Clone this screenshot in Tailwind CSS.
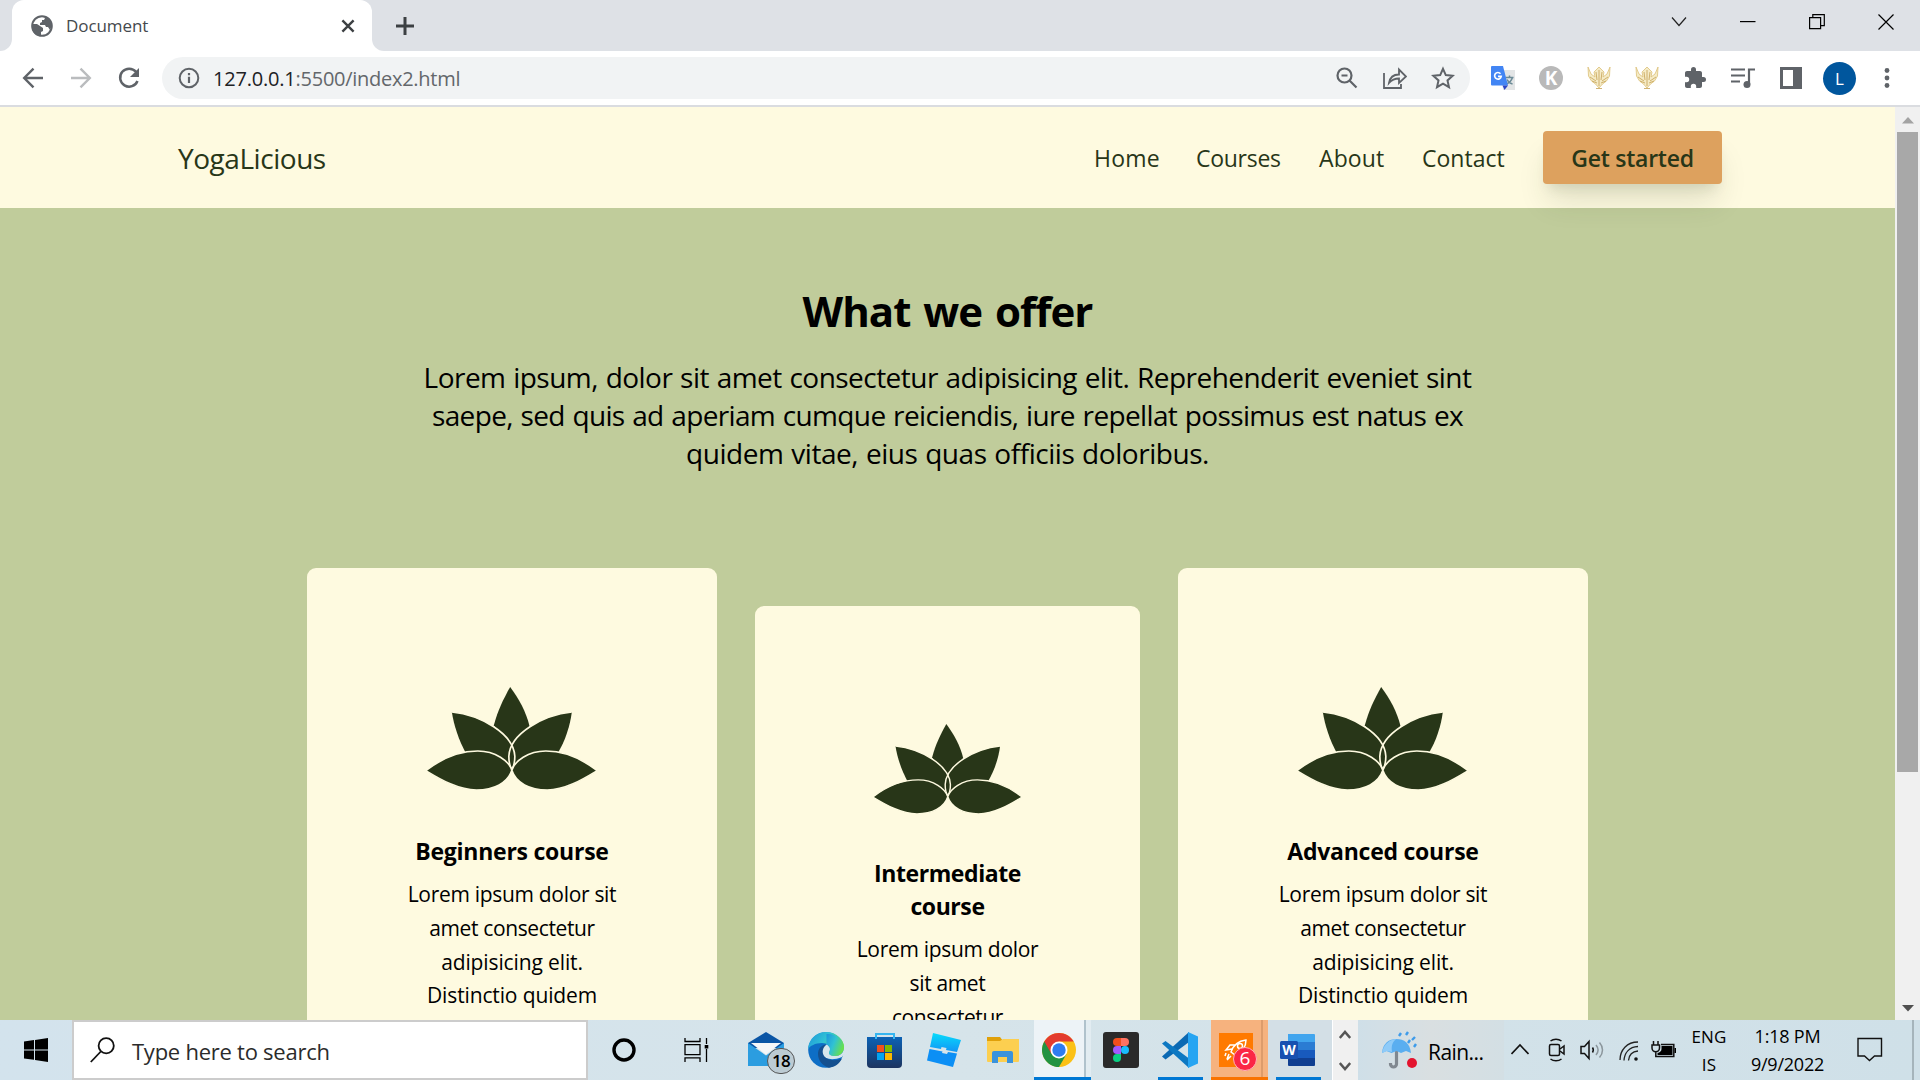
<!DOCTYPE html>
<html lang="en">
<head>
<meta charset="utf-8">
<title>Document</title>
<script src="https://cdn.jsdelivr.net/npm/@tailwindcss/browser@4"></script>
</head>
<body class="w-[1920px] h-[1080px] overflow-hidden flex flex-col bg-white font-['Open_Sans','Noto_Sans',sans-serif]">

<!-- Tab strip -->
<header class="h-[51px] shrink-0 bg-[#dee1e6] flex justify-between">
  <div class="flex">
    <div class="flex items-end">
      <div class="w-3 h-3 bg-white"><div class="w-3 h-3 bg-[#dee1e6] rounded-br-[12px]"></div></div>
      <div class="w-[360px] h-[51px] bg-white rounded-t-[12px] flex items-center pl-[19px] pr-[17px]">
        <svg class="w-[22px] h-[22px]" viewBox="0 0 22 22"><circle cx="11" cy="11" r="9.8" fill="#fff" stroke="#5f6368" stroke-width="2"/><path fill="#5f6368" d="M1 9h5l6 4v3l-2 1v4C4 21 0 16 1 9zM13 1l1 2-1 2h-2v2l-2 1v2h5l1 2h2l2 3c3-5 1-12-6-14z"/></svg>
        <span class="ml-[13px] text-[17px] leading-6 tracking-[-0.08px] text-[#45494d]">Document</span>
        <svg class="ml-auto w-[14px] h-[14px]" viewBox="0 0 14 14" stroke="#3c4043" stroke-width="2.4"><path d="M1.4 1.4l11.2 11.2M12.6 1.4L1.4 12.6"/></svg>
      </div>
      <div class="w-3 h-3 bg-white"><div class="w-3 h-3 bg-[#dee1e6] rounded-bl-[12px]"></div></div>
    </div>
    <svg class="ml-3 mt-[17px] w-[18px] h-[18px]" viewBox="0 0 18 18" stroke="#3c4043" stroke-width="3"><path d="M9 0v18M0 9h18"/></svg>
  </div>
  <div class="flex gap-[53px] pr-[26px] pt-[14px]">
    <svg class="w-4 h-4" viewBox="0 0 16 16" fill="none" stroke="#222" stroke-width="1.2"><path d="M1 3.5l7 8 7-8"/></svg>
    <svg class="w-4 h-4" viewBox="0 0 16 16" fill="none" stroke="#000" stroke-width="1.2"><path d="M0 7.6h15.5"/></svg>
    <svg class="w-4 h-4" viewBox="0 0 16 16" fill="none" stroke="#000" stroke-width="1.2"><path d="M.6 3.6h11v11H.6zM3.8 3.6V.7h11.5v11h-3.6"/></svg>
    <svg class="w-4 h-4" viewBox="0 0 16 16" fill="none" stroke="#000" stroke-width="1.2"><path d="M.5.5l15 15M15.500.5l-15 15"/></svg>
  </div>
</header>

<!-- Toolbar -->
<div class="h-[56px] shrink-0 bg-white border-b-2 border-[#dadce0] flex items-center pl-[22px]">
  <svg class="w-[22px] h-[22px]" viewBox="0 0 22 22" fill="none" stroke="#5f6368" stroke-width="2.4"><path d="M21 11H2.500M11.500 1.700L2.200 11l9.300 9.300"/></svg>
  <svg class="ml-[26px] w-[22px] h-[22px]" viewBox="0 0 22 22" fill="none" stroke="#babcbe" stroke-width="2.400"><path d="M1 11h18.500M10.500 1.700l9.300 9.300-9.300 9.300"/></svg>
  <svg class="ml-[25px] w-[24px] h-[24px]" viewBox="0 0 24 24"><path fill="none" stroke="#5f6368" stroke-width="2.500" d="M19 5.800A9 9 0 1 0 20.500 15"/><path fill="#5f6368" d="M22 2v9h-9z"/></svg>
  <div class="ml-[21px] w-[1308px] h-[42px] rounded-full bg-[#f1f3f4] flex items-center pl-4 pr-[15px]">
    <svg class="w-[22px] h-[22px]" viewBox="0 0 22 22"><circle cx="11" cy="11" r="9.300" fill="none" stroke="#5f6368" stroke-width="2"/><path stroke="#5f6368" stroke-width="2.200" d="M11 9.800v6.200M11 6v2.200"/></svg>
    <p class="ml-[13px] pt-[2px] text-[20px] leading-7 tracking-[-0.27px] text-[#63676b]"><span class="text-[#202124] tracking-[-0.2px]">127.0.0.1</span>:5500/index2.html</p>
    <div class="ml-auto flex items-center gap-6">
      <svg class="w-6 h-6" viewBox="0 0 24 24" fill="none" stroke="#5f6368" stroke-width="2.200"><circle cx="9.500" cy="9.500" r="7"/><path d="M6.500 9.500h6M14.500 14.500l7 7"/></svg>
      <svg class="w-6 h-6" viewBox="0 0 24 24" fill="none" stroke="#5f6368" stroke-width="1.800"><path d="M1 7v15h17v-4M6 17c1-6 5-8.500 10-8.500V3.500l7 7-7 6.500v-4.500c-4 0-7 1-10 4.500z"/></svg>
      <svg class="w-6 h-6" viewBox="0 0 24 24" fill="none" stroke="#5f6368" stroke-width="2"><path d="M12 2.800l2.800 6.300 6.900.7-5.200 4.600 1.500 6.800-6-3.500-6 3.500 1.500-6.800L2.300 9.800l6.900-.7z"/></svg>
    </div>
  </div>
  <div class="ml-[21px] flex items-center gap-6">
    <svg class="w-6 h-6" viewBox="0 0 24 24"><path fill="#e3e5e6" d="M10 4h14v20H12z"/><path d="M14.500 11.500h8M18.500 9.500v2M21.500 11.500c-1 3-3.500 5.500-6 6.500M16 13.500c1 2 3.500 4 5.500 4.500" fill="none" stroke="#6b8a96" stroke-width="1.500"/><path fill="#4285f4" d="M1 0h11l5 19.500H1a1 1 0 0 1-1-1V1a1 1 0 0 1 1-1z"/><path fill="#2b45c4" d="M11.500 19.500H17L13.500 24z"/><path fill="none" stroke="#fff" stroke-width="1.700" d="M9.500 7.700A3.300 3.300 0 1 0 10.200 10.300H7"/></svg>
    <div class="w-6 h-6 rounded-full bg-[#b9b9b9] text-white font-bold text-[19px] leading-6 text-center">K</div>
    <svg class="w-6 h-6" viewBox="0 0 24 24"><path fill="#f5ebc6" stroke="#dcc078" stroke-width=".8" d="M1 1l3 7 4 3-1-5 3-3 2-2 2 2 3 3-1 5 4-3 3-7-.5 9-3 5-4 3-3.500 4-3.500-4-4-3-3-5z"/><path fill="none" stroke="#c4a053" stroke-width=".8" d="M3 11l6 4M5 15l5 2M21 11l-6 4M19 15l-5 2M12 4v16M9 6l1 8M15 6l-1 8M9 22.500h6"/></svg>
    <svg class="w-6 h-6" viewBox="0 0 24 24"><path fill="#f5ebc6" stroke="#dcc078" stroke-width=".8" d="M1 1l3 7 4 3-1-5 3-3 2-2 2 2 3 3-1 5 4-3 3-7-.5 9-3 5-4 3-3.500 4-3.500-4-4-3-3-5z"/><path fill="none" stroke="#c4a053" stroke-width=".8" d="M3 11l6 4M5 15l5 2M21 11l-6 4M19 15l-5 2M12 4v16M9 6l1 8M15 6l-1 8M9 22.500h6"/></svg>
    <svg class="w-6 h-6" viewBox="0 0 24 24" fill="#5f6368"><path d="M20.500 11H19V7c0-1.100-.9-2-2-2h-4V3.500a2.500 2.500 0 0 0-5 0V5H4c-1.100 0-2 .9-2 2v3.800h1.500a2.700 2.700 0 0 1 0 5.400H2V20c0 1.100.9 2 2 2h3.800v-1.500a2.700 2.700 0 0 1 5.400 0V22H17c1.100 0 2-.9 2-2v-4h1.500a2.500 2.500 0 0 0 0-5z"/></svg>
    <svg class="w-6 h-6" viewBox="0 0 24 24"><path fill="none" stroke="#5f6368" stroke-width="2.200" d="M0 3.500h14M0 9.500h14M0 15.500h9M18 18V3.500h6"/><circle cx="16" cy="18.500" r="3.500" fill="#5f6368"/></svg>
    <svg class="w-6 h-6" viewBox="0 0 24 24" fill="#5f6368"><path fill-rule="evenodd" d="M1 1h22v22H1zM4 4v16h10V4z"/></svg>
    <div class="-ml-1 w-[33px] h-[33px] rounded-full bg-[#00569d] text-white text-[17px] leading-[33px] text-center">L</div>
    <svg class="w-[14px] h-6" viewBox="0 0 14 24" fill="#5f6368"><circle cx="7" cy="4.500" r="2.400"/><circle cx="7" cy="12" r="2.400"/><circle cx="7" cy="19.500" r="2.400"/></svg>
  </div>
</div>

<svg class="hidden">
  <symbol id="lotus" viewBox="0 0 506 309">
    <g fill="#283618">
      <path d="M249 0C275 35 297 75 307 117L254 200 200 115C212 70 228 38 249 0z"/>
      <path d="M74 75C160 84 260 140 263 208C263 222 259 240 254 247L117 200C95 160 80 115 74 75z"/>
      <path d="M434 75C348 84 248 140 245 208C245 222 249 240 254 247L391 200C415 160 429 115 434 75z"/>
      <g fill="none" stroke="#fefae0" stroke-width="5">
        <path d="M74 75C160 84 260 140 263 208C263 222 259 240 254 247"/>
        <path d="M434 75C348 84 248 140 245 208C245 222 249 240 254 247"/>
      </g>
      <path stroke="#fefae0" stroke-width="5" d="M-4 251C45 213 98 192 152 192C205 192 246 222 254 250C242 288 200 309 148 309C95 309 42 279-4 251z"/>
      <path stroke="#fefae0" stroke-width="5" d="M510 251C461 213 410 192 356 192C303 192 262 222 254 250C266 288 308 309 360 309C413 309 464 279 510 251z"/>
    </g>
  </symbol>
</svg>

<!-- Page viewport -->
<div class="h-[913px] shrink-0 flex overflow-hidden">
  <main class="w-[1895px] h-full overflow-hidden bg-[#c0cc9b] text-black">
    <nav class="h-[101px] bg-[#fefae0] flex items-center justify-between pl-[178px] pr-[173px] text-[#283618]">
      <span class="text-[28px] leading-9 tracking-[-0.46px]">YogaLicious</span>
      <div class="flex items-center text-[23px] leading-[30px]">
        <span class="w-[102px] pt-[1px] tracking-[0.2px]">Home</span>
        <span class="w-[123px] pt-[1px] tracking-[-0.28px]">Courses</span>
        <span class="w-[103px] pt-[1px] tracking-[0.1px]">About</span>
        <span class="w-[121px] pt-[1px]">Contact</span>
        <span class="w-[179px] h-[53px] pt-[1px] rounded-[4px] bg-[#dda15e] font-semibold tracking-[-0.25px] leading-[52px] text-center shadow-[0_22px_30px_-5px_rgba(40,54,24,0.13),0_9px_12px_-6px_rgba(40,54,24,0.13)]">Get started</span>
      </div>
    </nav>
    <section class="pt-[75px] flex flex-col items-center text-center">
      <h1 class="text-[42px] leading-[56px] font-bold tracking-[-1px] [word-spacing:3px]">What we offer</h1>
      <div class="mt-5 text-[28px] leading-[37.5px] [word-spacing:1px]">
        <p class="tracking-[-0.53px]">Lorem ipsum, dolor sit amet consectetur adipisicing elit. Reprehenderit eveniet sint</p>
        <p class="tracking-[-0.64px]">saepe, sed quis ad aperiam cumque reiciendis, iure repellat possimus est natus ex</p>
        <p class="tracking-[-0.46px] pt-[1px]">quidem vitae, eius quas officiis doloribus.</p>
      </div>
      <div class="mt-[95.5px] flex items-start gap-[38px]">
        <article class="w-[410px] h-[600px] pt-[119px] rounded-[9px] bg-[#fefae0] flex flex-col items-center">
          <svg class="-ml-[1px] w-[169px] h-[103px]"><use href="#lotus"/></svg>
          <h2 class="mt-[45px] text-[23px] leading-[33px] font-bold tracking-[-0.25px]">Beginners course</h2>
          <div class="mt-[10px] text-[21px] leading-[33.75px]">
            <p class="tracking-[-0.31px]">Lorem ipsum dolor sit</p>
            <p class="tracking-[-0.37px]">amet consectetur</p>
            <p class="tracking-[-0.12px]">adipisicing elit.</p>
            <p class="tracking-[-0.13px]">Distinctio quidem</p>
          </div>
        </article>
        <article class="mt-[38px] w-[385px] h-[600px] pt-[118px] rounded-[9px] bg-[#fefae0] flex flex-col items-center">
          <svg class="w-[147px] h-[90px]"><use href="#lotus"/></svg>
          <h2 class="mt-[43px] text-[23px] leading-[33px] font-bold tracking-[-0.42px]">Intermediate<br>course</h2>
          <div class="mt-[10px] text-[21px] leading-[33.75px]">
            <p class="tracking-[-0.3px]">Lorem ipsum dolor</p>
            <p class="tracking-[-0.33px]">sit amet</p>
            <p class="tracking-[-0.42px]">consectetur</p>
          </div>
        </article>
        <article class="w-[410px] h-[600px] pt-[119px] rounded-[9px] bg-[#fefae0] flex flex-col items-center">
          <svg class="-ml-[1px] w-[169px] h-[103px]"><use href="#lotus"/></svg>
          <h2 class="mt-[45px] text-[23px] leading-[33px] font-bold tracking-[-0.25px]">Advanced course</h2>
          <div class="mt-[10px] text-[21px] leading-[33.75px]">
            <p class="tracking-[-0.31px]">Lorem ipsum dolor sit</p>
            <p class="tracking-[-0.37px]">amet consectetur</p>
            <p class="tracking-[-0.12px]">adipisicing elit.</p>
            <p class="tracking-[-0.13px]">Distinctio quidem</p>
          </div>
        </article>
      </div>
    </section>
  </main>
  <!-- Scrollbar -->
  <div class="w-[25px] h-full bg-[#f0f0f0] flex flex-col items-center">
    <svg class="h-[25px] w-3 shrink-0" viewBox="0 0 12 25"><path fill="#a3a3a3" d="M0 16.500L6 10l6 6.500z"/></svg>
    <div class="w-[21px] h-[640px] bg-[#a8a8a8]"></div>
    <svg class="mt-auto h-[25px] w-3 shrink-0" viewBox="0 0 12 25"><path fill="#505050" d="M0 10l6 6.500 6-6.500z"/></svg>
  </div>
</div>

<!-- Taskbar -->
<footer class="h-[60px] shrink-0 flex bg-linear-to-r from-[#d3e3ed] via-[#d6e4ea] to-[#cfe0e8] text-black">
  <div class="w-[72px] flex items-center justify-center">
    <svg class="w-6 h-6 -mt-[1px]" viewBox="0 0 24 24"><path d="M0 3.500l10-1.400v9.300H0zM11 1.900L24 0v11.400H11zM0 12.500h10v9.300L0 20.400zM11 12.500h13V24l-13-1.900z"/></svg>
  </div>
  <div class="w-[516px] h-[60px] border-2 border-[#ccc] bg-white flex items-center pl-4">
    <svg class="w-[25px] h-[26px]" viewBox="0 0 25 26" fill="none" stroke="#111" stroke-width="1.800"><circle cx="16.200" cy="8.800" r="7.600"/><path d="M10.800 14.500L.8 25"/></svg>
    <span class="ml-[17px] pt-[1px] text-[22px] leading-7 tracking-[-0.25px] text-[#2b2b2b]">Type here to search</span>
  </div>
  <div class="w-[72px] flex items-center justify-center"><svg class="w-6 h-6" viewBox="0 0 24 24"><circle cx="12" cy="12" r="10" fill="none" stroke="#000" stroke-width="3.400"/></svg></div>
  <div class="w-[72px] flex items-center justify-center"><svg class="w-[25px] h-6" viewBox="0 0 25 24" fill="none" stroke="#000" stroke-width="1.300"><path d="M1 0v3.500h15V0M1 6.700h15v10H1zM1 24v-4.200h15V24M22.500 0v6M22.500 11v13"/><path fill="#000" stroke="none" d="M20.700 7h3.600v3.500h-3.600z"/></svg></div>

  <div class="w-[62px] pl-4 pt-3"><div class="relative w-9 h-9">
    <svg class="w-9 h-9" viewBox="0 0 36 36"><path fill="#0a55a5" d="M0 11L18 0l18 11v5H0z"/><path fill="#2b9de0" d="M0 11l18 12.500L36 11v23H0z"/><path fill="#f4f6f8" d="M3 11h30L18 22.500z"/></svg>
    <div class="absolute left-[19px] top-[16px] w-7 h-[26px] rounded-full border-[1.5px] border-[#555] bg-[#bccbd3] text-[17px] leading-[23px] text-center font-semibold tracking-[-0.8px]">18</div>
  </div></div>
  <div class="w-[59px] pl-[14px] pt-3"><svg class="w-9 h-9" viewBox="0 0 36 36"><defs><linearGradient id="edgeTop" x1="0" x2="1" y1="0" y2=".5"><stop offset="0" stop-color="#1c95dc"/><stop offset=".5" stop-color="#30c2d4"/><stop offset="1" stop-color="#67e04e"/></linearGradient></defs><circle cx="18" cy="18" r="17.800" fill="#0d6ec6"/><path fill="url(#edgeTop)" d="M0 17C1 6 9 0 18 0c11 0 18 8 18 15 0 5-4 9-9 9-3 0-6-1-6-3 0-1 1-1.500 1-4 0-3-3-6-8-6C7 11 2 14 0 17z"/><path fill="#d6e6ec" d="M36 15c0 6-4 9-9 9-3 0-6-1-6-3 0-1 1-1.500 1-4 0-2-1.500-3.500-3.500-4.500-4 2-6 6-4 10C17 27 24 29 34 25l2-3z"/><path fill="url(#edgeTop)" d="M18.500 2C28 1 36 8 36 15c0 5-4 9-9 9-3 0-6-1-6-3 0-1 1-1.500 1-4 0-2-1.500-3.500-3.500-4.500z"/><path fill="#14508f" d="M18.500 12.500C13 13 10 17 10 22c0 7 5 12 11 13.700 6-.7 10-3.700 13-9.200-2 1-10 3.500-16-.5-4-3-5-9 .5-13.500z"/></svg></div>
  <div class="w-[60px] pl-[14px] pt-3"><svg class="w-9 h-9" viewBox="0 0 36 36"><defs><linearGradient id="store" x2="0" y2="1"><stop stop-color="#0b62b5"/><stop offset="1" stop-color="#1d3460"/></linearGradient></defs><path fill="url(#store)" d="M0 5h35v27a4 4 0 0 1-4 4H4a4 4 0 0 1-4-4z"/><path fill="none" stroke="#35b5f0" stroke-width="2" d="M9 7V2h18v5"/><path fill="#f1511b" d="M10 13h7v7h-7z"/><path fill="#80b900" d="M18 13h7v7h-7z"/><path fill="#02a4ef" d="M10 21h7v7h-7z"/><path fill="#fbb800" d="M18 21h7v7h-7z"/></svg></div>
  <div class="w-[60px] pl-[14px] pt-3"><svg class="w-9 h-9" viewBox="0 0 36 36"><defs><linearGradient id="studio" x2="0" y2="1"><stop stop-color="#08dcfb"/><stop offset="1" stop-color="#1195f5"/></linearGradient></defs><path fill="url(#studio)" d="M6 1l28 7-4 12-11-2 .5-2-5-1-.5 2-11-2z"/><path fill="#0c8ff5" d="M2.500 17l13 2.500-.5 1.500 5 1 1-2 9 1.500-4 13.500L0 28.500z"/></svg></div>
  <div class="w-[61px] pl-[14px] pt-3"><svg class="w-9 h-9" viewBox="0 0 36 36"><path fill="#e0a009" d="M0 5h13l3 4v3H0z"/><path fill="#fccf50" d="M0 9h13l3-2h16v22a1 1 0 0 1-1 1H1a1 1 0 0 1-1-1z"/><path fill="#3a93dc" d="M5 31V21a2 2 0 0 1 2-2h17a2 2 0 0 1 2 2v10h-6v-6H11v6z"/></svg></div>
  <div class="w-[57px] flex border-b-[3px] border-[#0078d4]">
    <div class="w-[50px] bg-[#edf3f7] flex items-center justify-center"><svg class="w-[34px] h-[34px] mt-[3px]" viewBox="0 0 34 34"><circle cx="17" cy="17" r="17" fill="#fbc116"/><path fill="#229342" d="M2.300 8.500A17 17 0 0 0 17 34l7.400-12.700L17 17z"/><path fill="#e33b2e" d="M2.300 8.500a17 17 0 0 1 29.400 0H17L9.600 21.300z"/><circle cx="17" cy="17" r="8.500" fill="#fff"/><circle cx="17" cy="17" r="6.700" fill="#2f7cf0"/></svg></div>
    <div class="w-[2px] bg-[#b0c2cc]"></div><div class="w-[5px] bg-[#e2ecf1]"></div>
  </div>
  <div class="w-[59px] pl-3 pt-3"><svg class="w-9 h-9" viewBox="0 0 36 36"><rect width="36" height="36" rx="3" fill="#2a2a2a"/><path fill="#f24e1e" d="M14 6h4v8h-4a4 4 0 0 1 0-8z"/><path fill="#ff7262" d="M18 6h4a4 4 0 0 1 0 8h-4z"/><path fill="#a259ff" d="M14 14h4v8h-4a4 4 0 0 1 0-8z"/><circle cx="22" cy="18" r="4" fill="#1abcfe"/><path fill="#0acf83" d="M14 22h4v4a4 4 0 1 1-4-4z"/></svg></div>
  <div class="w-[61px] px-2"><div class="h-[60px] border-b-[3px] border-[#0078d4] pl-1 pt-3"><svg class="w-9 h-9" viewBox="0 0 36 36"><path fill="#0b69b3" d="M0 24.500L27 0v10L3.500 27.500z"/><path fill="#0d78c2" d="M0 11.500L3.500 9 27 26.500V36z"/><path fill="#27a5f2" d="M26 0l10 4.500v27L26 36z"/></svg></div></div>
  <div class="w-[57px] flex bg-[#f6b27e] border-b-[3px] border-[#f97300]">
    <div class="w-[50px] pl-2 pt-[13px]"><div class="relative w-[34px] h-[34px] bg-[#ff7a00]">
      <svg class="w-[34px] h-[34px]" viewBox="0 0 34 34" fill="none" stroke="#fff" stroke-width="1.500"><path d="M12 19c2-6 7-11 15-12 0 7-4 12-11 15zM13 16l-6 1 4-5 5 0M18 22l-1 4M10 21l-2 5M12 23l-4 4M7 20l-1 3"/><circle cx="21" cy="13" r="2.500"/></svg>
      <div class="absolute left-[14px] top-[14px] w-[24px] h-[24px] rounded-full border-[1.500px] border-[#ffb3b8] bg-[#fb2645] text-white text-[19px] leading-[21px] text-center">6</div>
    </div></div>
    <div class="w-[2px] bg-[#dd9c6b]"></div>
  </div>
  <div class="w-[64px] pl-2 bg-[#d3dfe6]"><div class="w-[45px] h-[60px] border-b-[3px] border-[#0078d4] pl-1 pt-[13px]"><svg class="w-9 h-9" viewBox="0 0 36 36"><path fill="#41a5ee" d="M8 1h26a1 1 0 0 1 1 1v7H8z"/><path fill="#2b7cd3" d="M8 9h27v8H8z"/><path fill="#185abd" d="M8 17h27v8H8z"/><path fill="#103f91" d="M8 25h27v7a1 1 0 0 1-1 1H9a1 1 0 0 1-1-1z"/><rect y="8" width="18" height="18" rx="1.500" fill="#1850b0"/><text x="9" y="22" text-anchor="middle" font-size="14" font-weight="700" fill="#fff">W</text></svg></div></div>
  <div class="w-[26px] bg-[#f0f0f0] border-l border-white flex flex-col items-center justify-between pt-[9px] pb-2">
    <svg class="-ml-[1px] w-3 h-[11px]" viewBox="0 0 12 11" fill="none" stroke="#555" stroke-width="2.500"><path d="M.8 9L6 3l5.200 6"/></svg>
    <svg class="-ml-[1px] w-3 h-[11px]" viewBox="0 0 12 11" fill="none" stroke="#555" stroke-width="2.500"><path d="M.8 2L6 8l5.200-6"/></svg>
  </div>
  <div class="w-[146px] pl-6 flex items-center bg-linear-to-r from-[#cfdfe8] via-[#d9dfe1] to-[#d3dfe4]">
    <svg class="w-[36px] h-[38px]" viewBox="0 0 36 38"><path fill="none" stroke="#808890" stroke-width="3.200" d="M14.500 20v13a3 3 0 0 1-6 0v-1"/><path fill="#5aaef0" d="M0 22C1 12 7 8 14.500 8S28 12 29 22l-5-2-5 2-4.500-2-5 2-5-2z"/><path fill="#8fcbf8" d="M10 21C9 14 11 10 14.500 8c-6 0-13 5-14.500 14l5-2z"/><path stroke="#3d9bea" stroke-width="2.400" d="M17 5l2-3M24 4l2-3M30 9l3-3M26 12l2-3M32 16l2-3"/><circle cx="30" cy="32" r="5" fill="#e3142f"/></svg>
    <span class="ml-[10px] pt-[3px] text-[21px] leading-7 tracking-[-0.55px]">Rain...</span>
  </div>
  <div class="w-[182px] flex items-center pl-[7px]">
    <svg class="w-[18px] h-6" viewBox="0 0 18 24" fill="none" stroke="#111" stroke-width="1.600"><path d="M.5 16L9 7l8.500 9"/></svg>
    <svg class="ml-[19px] w-[19px] h-6" viewBox="0 0 19 24" fill="none" stroke="#111" stroke-width="1.500"><rect x="1.500" y="6.500" width="10" height="11" rx="1.500"/><path d="M12 11l4-3v8l-4-3M2.500 3c3-2.300 8-2.300 11 0M2.500 21c3 2.300 8 2.300 11 0"/></svg>
    <svg class="ml-[13px] w-6 h-6" viewBox="0 0 24 24" fill="none" stroke="#111" stroke-width="1.500"><path d="M1 8.500h3.500L9 3.500v17L4.500 15.500H1z"/><path d="M12.500 9.500c1 1.500 1 3.500 0 5"/><path stroke="#8b969c" d="M16 7c2.500 3 2.500 7 0 10M19.500 4.500c4 4.500 4 10.500 0 15"/></svg>
    <svg class="ml-[15px] mt-[2px] w-5 h-[22px]" viewBox="0 0 20 22" fill="none" stroke="#222" stroke-width="1.300"><path d="M1 20C1 10 8 2 19 2M5 20.500C5.500 13 10 7 19 6.500M9.500 20.500C10 15 13 11.500 19 11"/><circle cx="17" cy="19" r="1.800" fill="#111" stroke="none"/></svg>
    <svg class="ml-[12px] w-[26px] h-6" viewBox="0 0 26 24" fill="none" stroke="#111" stroke-width="1.500"><path d="M2.500 3v4M7 3v4M1 7h7.500v3a3.700 3.700 0 0 1-7.500 0zM4.800 14v4.500h18V6.500H10"/><path fill="#000" stroke="none" d="M10.500 8h11v9h-15v-2c2.500-.5 4-2 4-4zM23.500 10H25v5h-1.500z"/></svg>
  </div>
  <div class="w-[46px] pt-[3px] flex flex-col items-center text-[17px] leading-7 tracking-[0.1px]"><span>ENG</span><span>IS</span></div>
  <div class="w-[111px] pt-[2px] flex flex-col items-center text-[18px] leading-7 tracking-[-0.22px]"><span>1:18 PM</span><span>9/9/2022</span></div>
  <div class="w-[69px] pl-[14px] pt-[17px]"><svg class="w-[26px] h-[26px]" viewBox="0 0 26 26" fill="none" stroke="#111" stroke-width="1.400"><path d="M1 1.500h23.500v17.500h-7l-5 4.500-5-4.500H1z"/></svg></div>
  <div class="w-[8px] border-l-2 border-[#a5b4bb]"></div>
</footer>
</body>
</html>
